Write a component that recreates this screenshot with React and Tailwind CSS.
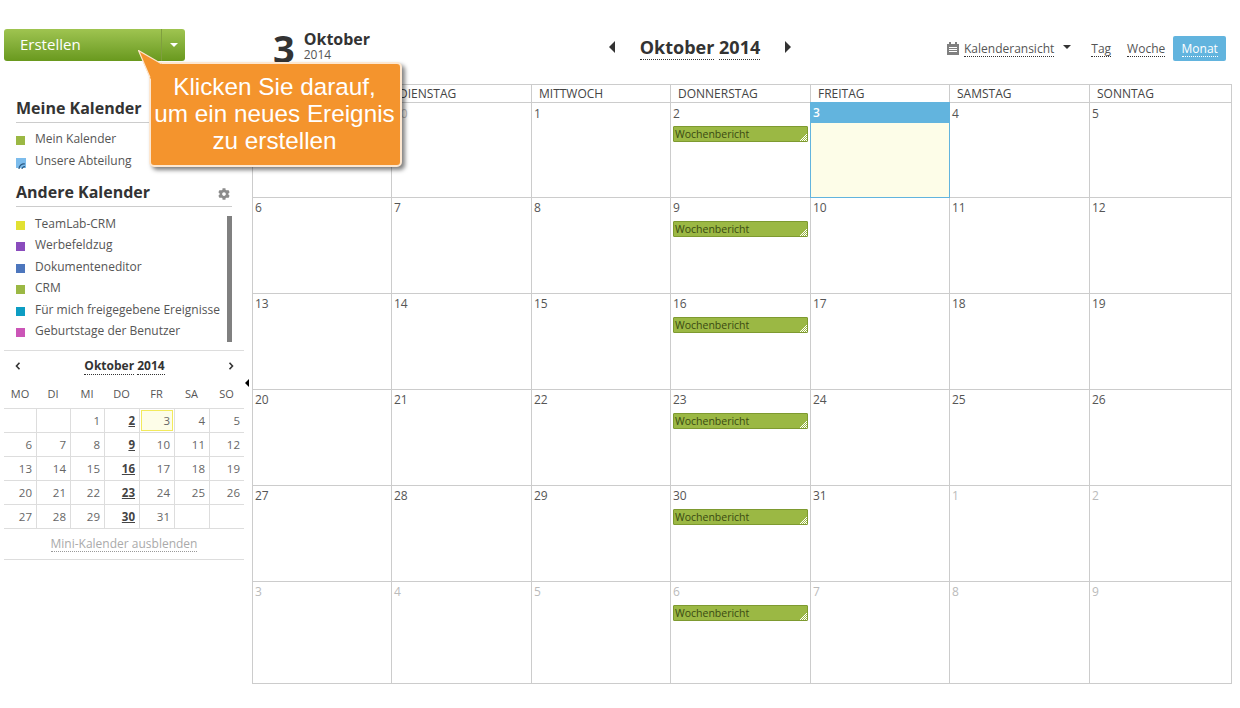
import { FaCog } from 'react-icons/fa';

const otherCalendars = [
  ['TeamLab-CRM', 'bg-[#e2e132]'],
  ['Werbefeldzug', 'bg-[#8a4cbd]'],
  ['Dokumenteneditor', 'bg-[#4d76bd]'],
  ['CRM', 'bg-[#9bb844]'],
  ['Für mich freigegebene Ereignisse', 'bg-[#0d9dc3]'],
  ['Geburtstage der Benutzer', 'bg-[#cb55b7]'],
];

const weekDays = ['MONTAG', 'DIENSTAG', 'MITTWOCH', 'DONNERSTAG', 'FREITAG', 'SAMSTAG', 'SONNTAG'];
const miniDays = ['MO', 'DI', 'MI', 'DO', 'FR', 'SA', 'SO'];

const weeks = [
  ['', '', 1, 2, 3, 4, 5],
  [6, 7, 8, 9, 10, 11, 12],
  [13, 14, 15, 16, 17, 18, 19],
  [20, 21, 22, 23, 24, 25, 26],
  [27, 28, 29, 30, 31, '', ''],
];

// leading grid cell of september is hidden behind the callout, the rest is plain numbers
const monthWeeks = [
  [29, 30, 1, 2, 3, 4, 5],
  [6, 7, 8, 9, 10, 11, 12],
  [13, 14, 15, 16, 17, 18, 19],
  [20, 21, 22, 23, 24, 25, 26],
  [27, 28, 29, 30, 31, 1, 2],
  [3, 4, 5, 6, 7, 8, 9],
];

const rowHeights = ['h-[95px]', 'h-[96px]', 'h-[96px]', 'h-[96px]', 'h-[96px]', 'h-[102px]'];

function Arrow({ dir }) {
  return (
    <svg width="8" height="12" viewBox="0 0 8 12" className="fill-[#333]">
      {dir === 'left' ? <path d="M7 0v12L1 6z" /> : <path d="M1 0v12l6-6z" />}
    </svg>
  );
}

function Chevron({ dir }) {
  return (
    <svg width="6" height="8" viewBox="0 0 6 8" fill="none" stroke="#333" strokeWidth="1.6">
      {dir === 'left' ? <path d="M4.5 .8 1.5 4l3 3.2" /> : <path d="M1.5 .8 4.5 4l-3 3.2" />}
    </svg>
  );
}

function CalendarItem({ name, color }) {
  return (
    <div className="flex h-[21.4px] items-center text-[12px] text-[#555]">
      <span className={`mt-[3px] mr-[10px] h-[9px] w-[9px] shrink-0 ${color}`} />
      <span className="whitespace-nowrap">{name}</span>
    </div>
  );
}

function SharedIcon() {
  return (
    <svg width="10" height="11" viewBox="0 0 10 11" className="mt-[5px] mr-[9px] shrink-0">
      <rect width="10" height="10" fill="#7cbcec" />
      <path d="M3 11a5 5 0 0 1 6-5M6 11a2.4 2.4 0 0 1 3-2.2" fill="none" stroke="#2c5a82" strokeWidth="1.2" />
    </svg>
  );
}

function Sidebar() {
  return (
    <aside className="relative w-[252px] shrink-0 pt-[29px] pl-[4px]">
      <div className="flex h-[32px] w-[181px] rounded-[3px] bg-gradient-to-b from-[#9fc450] to-[#69991d] text-white">
        <div className="flex-1 pl-[16px] text-[15px] leading-[31px]">Erstellen</div>
        <div className="flex w-[24px] items-center justify-center border-l border-[#7f9f3f]">
          <span className="h-0 w-0 border-x-[4px] border-t-[4px] border-x-transparent border-t-white" />
        </div>
      </div>

      <div className="mt-[36px] ml-[12px] w-[216px] border-b border-[#ccc] pb-[2px] text-[16px] leading-[23px] font-bold text-[#333]">
        Meine Kalender
      </div>
      <div className="mt-[5px] ml-[12px]">
        <CalendarItem name="Mein Kalender" color="bg-[#9bb844]" />
        <div className="mt-[1px] flex h-[22px] items-center text-[12px] text-[#555]">
          <SharedIcon />
          <span>Unsere Abteilung</span>
        </div>
      </div>

      <div className="mt-[9px] ml-[12px] flex w-[216px] items-center justify-between border-b border-[#ccc] pb-[2px] text-[16px] leading-[23px] font-bold text-[#333]">
        <span>Andere Kalender</span>
        <FaCog className="mt-[3px] mr-[2px] text-[12px] text-[#8c8c8c]" />
      </div>

      <div className="mt-[9px] ml-[12px] flex h-[126px] w-[216px] justify-between">
        <div className="-mt-[3px]">
          {otherCalendars.map(([name, color]) => (
            <CalendarItem key={name} name={name} color={color} />
          ))}
        </div>
        <div className="w-[5px] bg-[#808080]" />
      </div>

      <div className="mt-[8px] w-[240px] border-t border-[#ddd]">
        <div className="flex h-[30px] items-center justify-between pr-[10px] pl-[11px]">
          <Chevron dir="left" />
          <div className="text-[12px] leading-[16px] font-bold text-[#333]">
            <span className="border-b border-dotted border-[#333]">Oktober</span>{' '}
            <span className="border-b border-dotted border-[#333]">2014</span>
          </div>
          <Chevron dir="right" />
        </div>
        <div className="grid h-[27px] grid-cols-[32px_34px_34px_35px_35px_35px_35px] items-center pb-[2px] text-center text-[11px] text-[#555]">
          {miniDays.map((d) => (
            <span key={d}>{d}</span>
          ))}
        </div>
        <div className="border-t border-[#ddd]">
          {weeks.map((week, i) => (
            <div key={i} className="grid h-[24px] grid-cols-[32px_34px_34px_35px_35px_35px_35px] border-b border-[#ddd]">
              {week.map((day, j) => (
                <div
                  key={j}
                  className={`flex items-center justify-end pr-[4px] text-[11.5px] text-[#666] ${j > 0 ? 'border-l border-[#ddd]' : ''}`}
                >
                  {day === 3 ? (
                    <span className="-mr-[3px] flex h-[21px] w-[32px] items-center justify-end border border-[#f2ea5c] bg-[#fdfde8] pr-[2px]">
                      3
                    </span>
                  ) : (
                    <span className={j === 3 && day ? 'font-bold text-[#444] underline' : ''}>{day}</span>
                  )}
                </div>
              ))}
            </div>
          ))}
        </div>
        <div className="flex h-[31px] items-center justify-center border-b border-[#ddd] text-[12px] text-[#aaa]">
          <span className="border-b border-dotted border-[#999] leading-[15px]">Mini-Kalender ausblenden</span>
        </div>
      </div>

      <svg width="4" height="8" viewBox="0 0 4 8" className="absolute top-[379px] left-[245px] fill-black">
        <path d="M4 0v8L0 4z" />
      </svg>
    </aside>
  );
}

function Callout() {
  return (
    <div className="absolute top-[62px] left-[149px] h-[105px] w-[253px] rounded-[5px] border-2 border-[#fde7d0] bg-[#f4942d] pt-[9px] pr-[2px] text-center font-['Liberation_Sans',Arial,sans-serif] text-[24.3px] leading-[27px] text-white shadow-[3px_3px_4px_rgba(0,0,0,0.5)]">
      Klicken Sie darauf,
      <br />
      um ein neues Ereignis
      <br />
      zu erstellen
      <svg width="26" height="32" viewBox="0 0 26 32" className="absolute -top-[14px] -left-[13px]">
        <path d="M0 0 L24 14 L24 16 L14 16 L14 30 L12 28 Z" fill="#f4942d" />
        <path d="M23 13.5 L.5 .5 L12 27.5" fill="none" stroke="#fde7d0" strokeWidth="1.2" />
      </svg>
    </div>
  );
}

function Toolbar() {
  return (
    <div className="flex h-[55px] items-start text-[#333]">
      <div className="flex w-[356px] items-start pl-[21px]">
        <span className="pt-[1px] text-[38px] leading-[36px] font-bold">3</span>
        <div className="ml-[9px]">
          <div className="text-[16px] leading-[20px] font-bold">Oktober</div>
          <div className="text-[12px] leading-[12px] text-[#555]">2014</div>
        </div>
      </div>
      <div className="flex w-[184px] items-center justify-between pt-[6px]">
        <Arrow dir="left" />
        <div className="text-[18px] leading-[24px] font-bold">
          <span className="border-b border-dotted border-[#333]">Oktober</span>{' '}
          <span className="border-b border-dotted border-[#333]">2014</span>
        </div>
        <Arrow dir="right" />
      </div>
      <div className="ml-[155px] flex items-center pt-[7px] text-[12px] text-[#555]">
        <svg width="12" height="13" viewBox="0 0 12 13" className="mr-[5px]">
          <path d="M0 2h2V0h2v2h4V0h2v2h2v11H0z" fill="#808080" />
          <path d="M2 5h8v1H2zm0 2h8v1H2zm0 2h8v1H2z" fill="#fff" />
        </svg>
        <span className="border-b border-dotted border-[#333] leading-[15px]">Kalenderansicht</span>
        <span className="mb-[4px] ml-[9px] h-0 w-0 border-x-[4px] border-t-[4px] border-x-transparent border-t-[#333]" />
        <span className="ml-[20px] border-b border-dotted border-[#333] leading-[15px]">Tag</span>
        <span className="ml-[16px] border-b border-dotted border-[#333] leading-[15px]">Woche</span>
        <span className="ml-[8px] flex h-[25px] w-[53px] items-center justify-center rounded-[2px] bg-[#62b4de] text-white">
          <span className="border-b border-dotted border-white leading-[15px]">Monat</span>
        </span>
      </div>
    </div>
  );
}

function EventBar({ first }) {
  return (
    <div className={`relative ml-[2px] h-[16px] w-[135px] rounded-[1px] border border-[#7e9a30] bg-[#9bb844] pl-[1px] text-[10.5px] leading-[14px] text-[#3a4a12] ${first ? 'mt-[4px]' : 'mt-[5px]'}`}>
      Wochenbericht
      <svg width="7" height="7" viewBox="0 0 7 7" className="absolute right-0 bottom-0">
        <path d="M6 0h1v1H6zM4 2h1v1H4zM6 2h1v1H6zM2 4h1v1H2zM4 4h1v1H4zM6 4h1v1H6zM0 6h1v1H0zM2 6h1v1H2zM4 6h1v1H4zM6 6h1v1H6zM5 1h1v1H5zM3 3h1v1H3zM5 3h1v1H5zM1 5h1v1H1zM3 5h1v1H3zM5 5h1v1H5z" fill="#fff" />
      </svg>
    </div>
  );
}

function MonthGrid() {
  return (
    <div className="w-[980px] border-r border-b border-[#ccc]">
      <div className="grid h-[18px] grid-cols-[139px_140px_139px_140px_139px_140px_142px] border-t border-[#ccc] text-[12px] leading-[17px] text-[#444]">
        {weekDays.map((d) => (
          <div key={d} className="border-l border-[#ccc] pl-[7px]">
            {d}
          </div>
        ))}
      </div>
      {monthWeeks.map((week, i) => (
        <div key={i} className={`grid grid-cols-[139px_140px_139px_140px_139px_140px_142px] ${rowHeights[i]}`}>
          {week.map((day, j) => {
            const muted = (i === 4 && j > 4) || i === 5 || (i === 0 && j < 2);
            const today = i === 0 && j === 4;
            if (today) {
              return (
                <div key={j} className="relative z-10 -mr-px -mb-px border border-[#62b4de] bg-[#fdfde8]">
                  <div className="h-[20px] bg-[#62b4de] pl-[2px] text-[12px] leading-[20px] font-semibold text-white">3</div>
                </div>
              );
            }
            return (
              <div key={j} className={`border-t border-l border-[#ccc] ${i === 0 ? 'pt-[2px]' : 'pt-[1px]'}`}>
                <div className={`pl-[2px] text-[12px] leading-[17px] ${muted ? 'text-[#bbb]' : 'text-[#555]'}`}>{day}</div>
                {j === 3 && <EventBar first={i === 0} />}
              </div>
            );
          })}
        </div>
      ))}
    </div>
  );
}

export default function App() {
  return (
    <div className="relative flex h-[708px] w-[1240px] overflow-hidden bg-white font-['Open_Sans',sans-serif]">
      <Sidebar />
      <main className="w-[988px] pt-[29px]">
        <Toolbar />
        <MonthGrid />
      </main>
      <Callout />
    </div>
  );
}
